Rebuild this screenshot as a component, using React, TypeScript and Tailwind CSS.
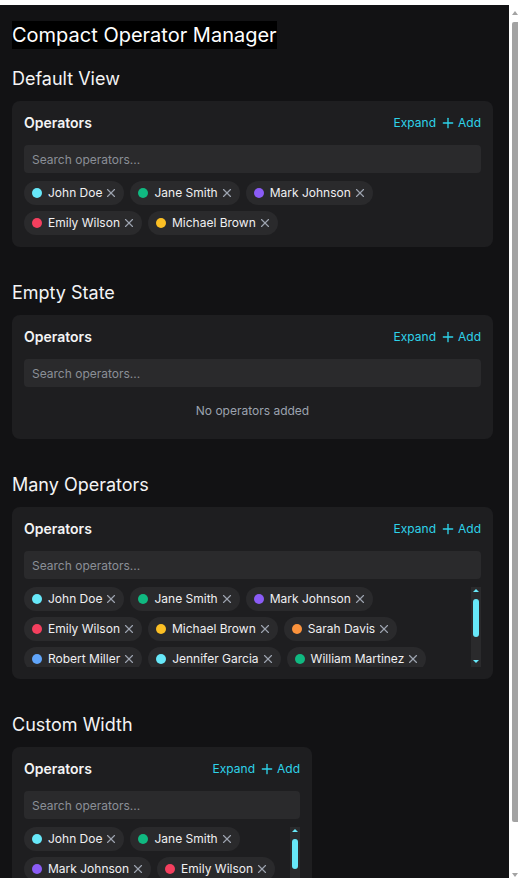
import { Plus, X } from 'lucide-react';

type Operator = { id: number; name: string; color: string };

const defaultOps: Operator[] = [
    { id: 1, name: 'John Doe', color: '#67e8f9' },
    { id: 2, name: 'Jane Smith', color: '#10b981' },
    { id: 3, name: 'Mark Johnson', color: '#8b5cf6' },
    { id: 4, name: 'Emily Wilson', color: '#f43f5e' },
    { id: 5, name: 'Michael Brown', color: '#fbbf24' },
];

const manyOps: Operator[] = [
    ...defaultOps,
    { id: 6, name: 'Sarah Davis', color: '#fb923c' },
    { id: 7, name: 'Robert Miller', color: '#60a5fa' },
    { id: 8, name: 'Jennifer Garcia', color: '#67e8f9' },
    { id: 9, name: 'William Martinez', color: '#10b981' },
    { id: 10, name: 'Linda Anderson', color: '#8b5cf6' },
    { id: 11, name: 'David Thomas', color: '#f43f5e' },
];

// Small scrollbar beside the tag list (dark track, cyan thumb and arrows)
function ListScrollbar({ thumb }: { thumb: number }) {
    return (
        <div className="w-[10px] h-20 shrink-0 bg-[#2a2a2c] flex flex-col">
            <svg width="10" height="10" className="shrink-0">
                <polygon points="2,5 5,2 8,5" fill="#67e8f9" />
            </svg>
            <div className="mt-[2px] mx-[2px] w-[6px] rounded-full bg-[#67e8f9] shrink-0" style={{ height: thumb }} />
            <div className="flex-1" />
            <svg width="10" height="10" className="shrink-0">
                <polygon points="2,3 8,3 5,6" fill="#67e8f9" />
            </svg>
        </div>
    );
}

function OperatorManager({
    operators,
    width,
    thumb,
}: {
    operators: Operator[];
    width?: 'full' | 'custom';
    thumb?: number;
}) {
    return (
        <div
            className={
                width === 'custom'
                    ? 'w-[300px] bg-[#1e1e20] rounded-lg p-3'
                    : 'w-full bg-[#1e1e20] rounded-lg p-3'
            }
        >
            {/* Header */}
            <div className="flex items-center justify-between h-5 mb-3">
                <span className="text-sm font-semibold text-[#f4f4f5]">Operators</span>
                <div className="flex items-center gap-1 text-xs text-[#2ed3ea]">
                    <button className="leading-4">Expand</button>
                    <button className="flex items-center gap-0.5 leading-4">
                        <Plus size={16} strokeWidth={2} />
                        Add
                    </button>
                </div>
            </div>

            {/* Search */}
            <input
                className="w-full h-7 rounded bg-[#2a2a2c] px-2 text-xs text-gray-200 placeholder:text-[#8b8f97] outline-none"
                placeholder="Search operators..."
            />

            {/* Tags */}
            {operators.length === 0 ? (
                <div className="mt-2 py-2 text-center text-xs leading-4 text-[#9ca3af]">No operators added</div>
            ) : (
                <div className="mt-2 flex items-start">
                    <div className="flex-1 max-h-20 overflow-hidden flex flex-wrap gap-1.5">
                        {operators.map((op) => (
                            <span
                                key={op.id}
                                className="flex items-center h-6 rounded-full bg-[#2a2a2c] pl-2 pr-1.5 text-xs text-[#f0f0f2]"
                            >
                                <span className="w-2.5 h-2.5 rounded-full mr-1.5" style={{ backgroundColor: op.color }} />
                                {op.name}
                                <button className="ml-0.5 text-[#9ca3af]">
                                    <X size={14} strokeWidth={2} />
                                </button>
                            </span>
                        ))}
                    </div>
                    {thumb ? <ListScrollbar thumb={thumb} /> : null}
                </div>
            )}
        </div>
    );
}

function Section({ title, last, children }: { title: string; last?: boolean; children: React.ReactNode }) {
    return (
        <section className={last ? '' : 'mb-8'}>
            <h2 className="text-lg text-[#f4f4f5] mb-2">{title}</h2>
            {children}
        </section>
    );
}

export default function App() {
    return (
        <div className="h-screen bg-white pt-[5px] flex flex-col font-['Inter',sans-serif]">
            <div className="flex-1 min-h-0 flex">
                {/* Page content */}
                <div className="flex-1 min-w-0 overflow-hidden bg-[#121214]">
                    <div className="pl-3 pr-4 pt-4 pb-4">
                        <h1 className="inline-block bg-black text-xl leading-7 text-white mb-4">Compact Operator Manager</h1>

                        <Section title="Default View">
                            <OperatorManager operators={defaultOps} />
                        </Section>

                        <Section title="Empty State">
                            <OperatorManager operators={[]} />
                        </Section>

                        <Section title="Many Operators">
                            <OperatorManager operators={manyOps} thumb={38} />
                        </Section>

                        <Section title="Custom Width" last>
                            <OperatorManager operators={manyOps} width="custom" thumb={30} />
                        </Section>
                    </div>
                </div>

                {/* Page scrollbar */}
                <div className="w-[9px] shrink-0 bg-white flex flex-col">
                    <svg width="9" height="14" className="shrink-0">
                        <polygon points="3,10 6,6 9,10" fill="#a3a3a3" />
                    </svg>
                    <div className="mt-[3px] ml-[3px] h-[800px] bg-[#a3a3a3] rounded-l-[2px] shrink-0" />
                    <div className="flex-1" />
                    <svg width="9" height="14" className="shrink-0">
                        <polygon points="3,9 9,9 6,13" fill="#a3a3a3" />
                    </svg>
                </div>
            </div>
        </div>
    );
}
